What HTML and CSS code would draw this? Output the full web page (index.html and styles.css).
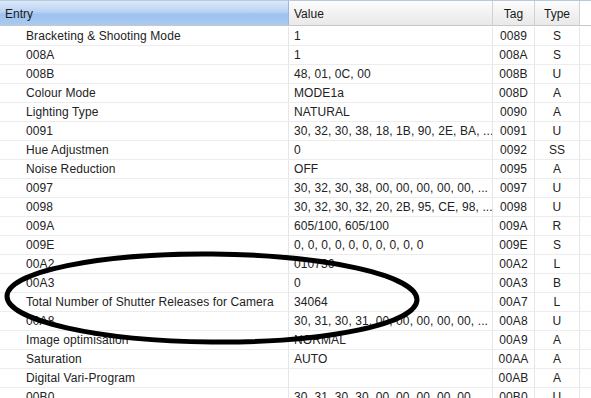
FILE: index.html
```html
<!DOCTYPE html>
<html>
<head>
<meta charset="utf-8">
<link rel="stylesheet" href="styles.css">
</head>
<body>
<div class="grid">
  <div class="head">
    <div class="hc entry sorted">Entry</div>
    <div class="hc value">Value</div>
    <div class="hc tag">Tag</div>
    <div class="hc type">Type</div>
    <div class="hc rest"></div>
  </div>
  <div class="row"><div class="c entry">Bracketing &amp; Shooting Mode</div><div class="c value">1</div><div class="c tag">0089</div><div class="c type">S</div><div class="c rest"></div></div>
  <div class="row"><div class="c entry">008A</div><div class="c value">1</div><div class="c tag">008A</div><div class="c type">S</div><div class="c rest"></div></div>
  <div class="row"><div class="c entry">008B</div><div class="c value">48, 01, 0C, 00</div><div class="c tag">008B</div><div class="c type">U</div><div class="c rest"></div></div>
  <div class="row"><div class="c entry">Colour Mode</div><div class="c value">MODE1a</div><div class="c tag">008D</div><div class="c type">A</div><div class="c rest"></div></div>
  <div class="row"><div class="c entry">Lighting Type</div><div class="c value">NATURAL</div><div class="c tag">0090</div><div class="c type">A</div><div class="c rest"></div></div>
  <div class="row"><div class="c entry">0091</div><div class="c value">30, 32, 30, 38, 18, 1B, 90, 2E, BA, ...</div><div class="c tag">0091</div><div class="c type">U</div><div class="c rest"></div></div>
  <div class="row"><div class="c entry">Hue Adjustmen</div><div class="c value">0</div><div class="c tag">0092</div><div class="c type">SS</div><div class="c rest"></div></div>
  <div class="row"><div class="c entry">Noise Reduction</div><div class="c value">OFF</div><div class="c tag">0095</div><div class="c type">A</div><div class="c rest"></div></div>
  <div class="row"><div class="c entry">0097</div><div class="c value">30, 32, 30, 38, 00, 00, 00, 00, 00, ...</div><div class="c tag">0097</div><div class="c type">U</div><div class="c rest"></div></div>
  <div class="row"><div class="c entry">0098</div><div class="c value">30, 32, 30, 32, 20, 2B, 95, CE, 98, ...</div><div class="c tag">0098</div><div class="c type">U</div><div class="c rest"></div></div>
  <div class="row"><div class="c entry">009A</div><div class="c value">605/100, 605/100</div><div class="c tag">009A</div><div class="c type">R</div><div class="c rest"></div></div>
  <div class="row"><div class="c entry">009E</div><div class="c value">0, 0, 0, 0, 0, 0, 0, 0, 0, 0</div><div class="c tag">009E</div><div class="c type">S</div><div class="c rest"></div></div>
  <div class="row"><div class="c entry">00A2</div><div class="c value">010736</div><div class="c tag">00A2</div><div class="c type">L</div><div class="c rest"></div></div>
  <div class="row"><div class="c entry">00A3</div><div class="c value">0</div><div class="c tag">00A3</div><div class="c type">B</div><div class="c rest"></div></div>
  <div class="row"><div class="c entry">Total Number of Shutter Releases for Camera</div><div class="c value">34064</div><div class="c tag">00A7</div><div class="c type">L</div><div class="c rest"></div></div>
  <div class="row"><div class="c entry">00A8</div><div class="c value">30, 31, 30, 31, 00, 00, 00, 00, 00, ...</div><div class="c tag">00A8</div><div class="c type">U</div><div class="c rest"></div></div>
  <div class="row"><div class="c entry">Image optimisation</div><div class="c value">NORMAL</div><div class="c tag">00A9</div><div class="c type">A</div><div class="c rest"></div></div>
  <div class="row"><div class="c entry">Saturation</div><div class="c value">AUTO</div><div class="c tag">00AA</div><div class="c type">A</div><div class="c rest"></div></div>
  <div class="row"><div class="c entry">Digital Vari-Program</div><div class="c value"></div><div class="c tag">00AB</div><div class="c type">A</div><div class="c rest"></div></div>
  <div class="row"><div class="c entry">00B0</div><div class="c value">30, 31, 30, 30, 00, 00, 00, 00, 00, ...</div><div class="c tag">00B0</div><div class="c type">U</div><div class="c rest"></div></div>
</div>
<svg class="mark" width="591" height="398" viewBox="0 0 591 398">
  <ellipse cx="212" cy="298" rx="205" ry="44" fill="none" stroke="#000" stroke-width="5" transform="rotate(0.5 212 298)"/>
</svg>
</body>
</html>
```

FILE: styles.css
```css
html, body {
  margin: 0;
  padding: 0;
  background: #fff;
  overflow: hidden;
}
body {
  width: 591px;
  height: 398px;
  font-family: "Liberation Sans", Arial, sans-serif;
  font-size: 12px;
  color: #222;
  position: relative;
}
.grid {
  display: flex;
  flex-direction: column;
  border-top: 1px solid #b9c9dc;
}
.head, .row {
  display: grid;
  grid-template-columns: 289px 204px 42px 45px 1fr;
}
.head {
  height: 24px;
  border-bottom: 1px solid #c8c8c8;
  margin-bottom: 1px;
}
.hc {
  display: flex;
  align-items: center;
  padding-top: 1px;
  background: linear-gradient(#fdfdfd, #f2f2f2 50%, #e9e9e9);
  border-right: 1px solid #d2d2d2;
  color: #1a1a1a;
}
.hc.sorted {
  background: linear-gradient(#dbe9f9, #b9d3f3 45%, #9ec2ee 55%, #a9caf1);
  border-right: 1px solid #9ab6d8;
}
.hc.entry { padding-left: 5px; }
.hc.value { padding-left: 5px; }
.hc.tag, .hc.type { justify-content: center; }
.hc.rest { border-right: none; background: #fff; }
.row {
  height: 18px;
  border-bottom: 1px solid #ececec;
}
.c {
  display: flex;
  align-items: center;
  white-space: nowrap;
  overflow: hidden;
  border-right: 1px solid #e6e6e6;
  letter-spacing: 0.1px;
}
.c.entry { padding-left: 26px; }
.c.value { padding-left: 5px; }
.c.tag, .c.type { justify-content: center; }
.c.rest { border-right: none; }
.mark {
  position: absolute;
  left: 0;
  top: 0;
  pointer-events: none;
}
```
